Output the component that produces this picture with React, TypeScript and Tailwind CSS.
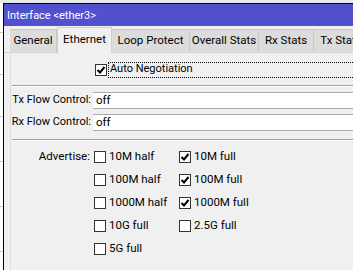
import React from 'react';

const tabs = [
  { label: 'General', w: 'w-[47px]' },
  { label: 'Ethernet', w: 'w-[55px]', active: true },
  { label: 'Loop Protect', w: 'w-[78px]' },
  { label: 'Overall Stats', w: 'w-[69px]' },
  { label: 'Rx Stats', w: 'w-[55px]' },
  { label: 'Tx Stats', w: 'w-[55px]' },
];

const advertise: [string, boolean][][] = [
  [['10M half', false], ['10M full', true]],
  [['100M half', false], ['100M full', true]],
  [['1000M half', false], ['1000M full', true]],
  [['10G full', false], ['2.5G full', false]],
  [['5G full', false]],
];

function Box({ checked }: { checked: boolean }) {
  return (
    <span className="w-[12px] h-[12px] border border-[#333333] bg-white flex items-center justify-center shrink-0">
      {checked && (
        <svg width="10" height="10" viewBox="0 0 10 10">
          <path d="M1.5 5 L4 7.5 L8.5 2" fill="none" stroke="#000" strokeWidth="2" />
        </svg>
      )}
    </span>
  );
}

function Check({ label, checked }: { label: string; checked: boolean }) {
  return (
    <div className="flex items-center gap-[3px] h-[23px]">
      <Box checked={checked} />
      <span className="whitespace-nowrap">{label}</span>
    </div>
  );
}

export default function App() {
  return (
    <div
      className="w-[353px] h-[270px] overflow-hidden bg-[#e9e9e9] flex flex-col text-[11px] text-black"
      style={{ fontFamily: 'Roboto, "Liberation Sans", sans-serif' }}
    >
      <div className="h-[3px] shrink-0" />
      <div className="flex flex-1 min-h-0">
        {/* background window peeking on the left */}
        <div className="w-[3px] shrink-0 bg-white flex flex-col">
          {[30, 42, 42, 45, 45, 45].map((h, i) => (
            <div key={i} style={{ height: h }} className="border-b border-[#c8c8c8]" />
          ))}
        </div>
        <div className="flex-1 border-l border-t border-black bg-[#f0f0f0] flex flex-col">
          <div className="h-[22px] bg-[#5151cd] text-white text-[11px] flex items-center pl-[3px] shrink-0 leading-none">
            Interface &lt;ether3&gt;
          </div>
          {/* tabs */}
          <div className="flex items-end h-[27px] pl-[6px] shrink-0 border-b border-[#d4d4d4] whitespace-nowrap text-[11.5px]">
            {tabs.map((t) =>
              t.active ? (
                <div
                  key={t.label}
                  className={`${t.w} h-[26px] -mb-px bg-[#f0f0f0] border-x border-t border-[#d0d0d0] flex items-center justify-center pb-[2px] shrink-0`}
                >
                  {t.label}
                </div>
              ) : (
                <div
                  key={t.label}
                  className={`${t.w} h-[23px] bg-[#dcdcdc] border-r border-t border-[#c8c8c8] flex items-center justify-center shrink-0`}
                >
                  {t.label}
                </div>
              )
            )}
          </div>
          {/* content */}
          <div className="flex-1 ml-[6px] border-l border-[#dcdcdc] flex flex-col pl-[1px] text-[11px]">
            <div className="flex items-center h-[17px] mt-[8px] pl-[83px]">
              <Box checked />
              <span className="ml-[1px] flex-1 h-[16px] border border-dotted border-black pl-[1px] flex items-center">
                Auto Negotiation
              </span>
            </div>
            <div className="mt-[7px] border-t border-[#a0a0a0] border-b border-b-white" />
            <div className="flex flex-col gap-[5px] mt-[5px]">
              {['Tx Flow Control:', 'Rx Flow Control:'].map((l) => (
                <div key={l} className="flex items-center h-[17px]">
                  <span className="w-[81px] flex justify-end pr-[2px] whitespace-nowrap">{l}</span>
                  <div className="flex-1 h-[17px] bg-white border-y border-[#a9a9a9] pl-[3px] flex items-center text-[11.5px]">off</div>
                </div>
              ))}
            </div>
            <div className="mt-[8px] border-t border-[#a0a0a0] border-b border-b-white" />
            <div className="flex mt-[4px]">
              <div className="w-[78px] h-[23px] flex items-center justify-end whitespace-nowrap text-[11.5px]">Advertise:</div>
              <div className="pl-[4px] flex flex-col text-[11.5px]">
                {advertise.map((row, i) => (
                  <div key={i} className="flex">
                    {row.map(([label, c]) => (
                      <div key={label} className="w-[85px]">
                        <Check label={label} checked={c} />
                      </div>
                    ))}
                  </div>
                ))}
              </div>
            </div>
          </div>
        </div>
      </div>
    </div>
  );
}
